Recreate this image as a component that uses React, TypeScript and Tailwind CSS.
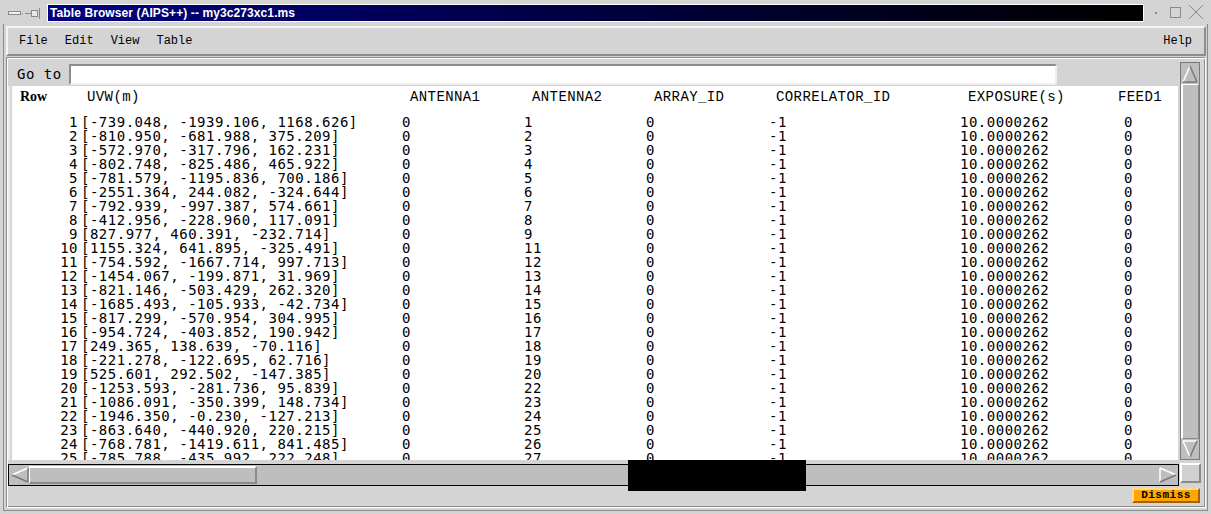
import React from "react";

type Row = [number, string, number];

const rows: Row[] = [
  [1, "[-739.048, -1939.106, 1168.626]", 1],
  [2, "[-810.950, -681.988, 375.209]", 2],
  [3, "[-572.970, -317.796, 162.231]", 3],
  [4, "[-802.748, -825.486, 465.922]", 4],
  [5, "[-781.579, -1195.836, 700.186]", 5],
  [6, "[-2551.364, 244.082, -324.644]", 6],
  [7, "[-792.939, -997.387, 574.661]", 7],
  [8, "[-412.956, -228.960, 117.091]", 8],
  [9, "[827.977, 460.391, -232.714]", 9],
  [10, "[1155.324, 641.895, -325.491]", 11],
  [11, "[-754.592, -1667.714, 997.713]", 12],
  [12, "[-1454.067, -199.871, 31.969]", 13],
  [13, "[-821.146, -503.429, 262.320]", 14],
  [14, "[-1685.493, -105.933, -42.734]", 15],
  [15, "[-817.299, -570.954, 304.995]", 16],
  [16, "[-954.724, -403.852, 190.942]", 17],
  [17, "[249.365, 138.639, -70.116]", 18],
  [18, "[-221.278, -122.695, 62.716]", 19],
  [19, "[525.601, 292.502, -147.385]", 20],
  [20, "[-1253.593, -281.736, 95.839]", 22],
  [21, "[-1086.091, -350.399, 148.734]", 23],
  [22, "[-1946.350, -0.230, -127.213]", 24],
  [23, "[-863.640, -440.920, 220.215]", 25],
  [24, "[-768.781, -1419.611, 841.485]", 26],
  [25, "[-785.788, -435.992, 222.248]", 27],
];

function ArrowUp() {
  return (
    <svg width="18" height="20" viewBox="0 0 18 20">
      <line x1="2" y1="18" x2="9" y2="2" stroke="#ffffff" strokeWidth="1.5" />
      <line x1="9" y1="2" x2="16" y2="18" stroke="#7a7a7a" strokeWidth="1.5" />
      <line x1="2" y1="18" x2="16" y2="18" stroke="#7a7a7a" strokeWidth="1.5" />
    </svg>
  );
}
function ArrowDown() {
  return (
    <svg width="18" height="20" viewBox="0 0 18 20">
      <line x1="2" y1="2" x2="16" y2="2" stroke="#ffffff" strokeWidth="1.5" />
      <line x1="2" y1="2" x2="9" y2="18" stroke="#ffffff" strokeWidth="1.5" />
      <line x1="16" y1="2" x2="9" y2="18" stroke="#7a7a7a" strokeWidth="1.5" />
    </svg>
  );
}
function ArrowLeft() {
  return (
    <svg width="18" height="18" viewBox="0 0 18 18">
      <line x1="1" y1="9" x2="17" y2="2" stroke="#ffffff" strokeWidth="1.5" />
      <line x1="1" y1="9" x2="17" y2="16" stroke="#7a7a7a" strokeWidth="1.5" />
      <line x1="17" y1="2" x2="17" y2="16" stroke="#7a7a7a" strokeWidth="1.5" />
    </svg>
  );
}
function ArrowRight() {
  return (
    <svg width="18" height="18" viewBox="0 0 18 18">
      <line x1="1" y1="2" x2="1" y2="16" stroke="#ffffff" strokeWidth="1.5" />
      <line x1="1" y1="2" x2="17" y2="9" stroke="#ffffff" strokeWidth="1.5" />
      <line x1="1" y1="16" x2="17" y2="9" stroke="#7a7a7a" strokeWidth="1.5" />
    </svg>
  );
}

export default function App() {
  return (
    <div className="relative h-[514px] w-[1211px] overflow-hidden bg-[#d4d4d4] font-['Liberation_Mono',monospace] text-black">
      {/* Title bar */}
      <div className="flex h-[24px] items-start">
        <div className="h-[24px] w-[47px]">
          <svg width="47" height="24" viewBox="0 0 47 24">
            <rect x="8.5" y="11.5" width="12" height="3" fill="#f0f0f0" stroke="#8a8a8a" />
            <rect x="22" y="13" width="1" height="1" fill="#8a8a8a" />
            <line x1="25" y1="13.5" x2="31" y2="13.5" stroke="#8a8a8a" />
            <rect x="31.5" y="10.5" width="6" height="6" fill="#e8e8e8" stroke="#8a8a8a" />
            <line x1="39.5" y1="8" x2="39.5" y2="19" stroke="#8a8a8a" />
          </svg>
        </div>
        <div className="mt-[4px] flex h-[18px] w-[1097px] items-center border border-white bg-[linear-gradient(to_right,#000080,#000000)] pl-[2px] font-['Liberation_Sans',sans-serif] text-[12px] font-bold leading-none tracking-[0.1px] text-white">
          Table Browser (AIPS++) -- my3c273xc1.ms
        </div>
        <div className="h-[24px] w-[67px]">
          <svg width="67" height="24" viewBox="0 0 67 24">
            <rect x="11" y="12" width="2" height="2" fill="#8a8a8a" />
            <rect x="26.5" y="7.5" width="10" height="10" fill="none" stroke="#8a8a8a" />
            <line x1="45" y1="5" x2="59" y2="19" stroke="#8a8a8a" />
            <line x1="59" y1="5" x2="45" y2="19" stroke="#8a8a8a" />
          </svg>
        </div>
      </div>

      {/* Window frame */}
      <div className="ml-[3px] h-[487px] w-[1205px] border-b border-l border-r border-[#8c8c8c] pl-[2px] pt-[2px]">
        {/* Menu bar */}
        <div className="flex h-[30px] w-[1200px] items-center border-2 border-b-[#8c8c8c] border-l-[#f4f4f4] border-r-[#8c8c8c] border-t-[#f4f4f4] pl-[11px] pr-[12px] text-[12px]">
          <div className="flex gap-[17px]">
            <span>File</span>
            <span>Edit</span>
            <span>View</span>
            <span>Table</span>
          </div>
          <span className="ml-auto">Help</span>
        </div>

        {/* Main panel */}
        <div className="mt-[1px] flex h-[451px] w-[1200px] flex-col border border-b-white border-l-[#8c8c8c] border-r-white border-t-[#8c8c8c] pl-[1px] pt-[4px] shadow-[inset_1px_1px_0_#ffffff,inset_-1px_-1px_0_#8c8c8c]">
          <div className="flex h-[398px] gap-[2px]">
            {/* left column */}
            <div className="flex w-[1170px] flex-col">
              <div className="flex h-[24px] items-start">
                <div className="flex h-[24px] w-[61px] items-center pl-[9px] font-['DejaVu_Sans_Mono',monospace] text-[14px] tracking-[0.5px]">
                  Go to
                </div>
                <div className="mt-[2px] h-[21px] w-[988px] border-2 border-b-[#eeeeee] border-l-[#8c8c8c] border-r-[#eeeeee] border-t-[#8c8c8c] bg-white" />
              </div>
              <div className="flex h-[374px] border-l-2 border-[#ececec] pl-[2px]">
                <div className="h-[374px] w-[1166px] overflow-hidden bg-white">
                  {/* header */}
                  <div className="mt-[4px] flex h-[14px] items-center whitespace-pre text-[14px] leading-[14px] tracking-[0.4px]">
                    <span className="w-[8px]" />
                    <span className="w-[67px] font-['Liberation_Serif',serif] text-[14px] font-bold tracking-normal">Row</span>
                    <span className="w-[323px]">UVW(m)</span>
                    <span className="w-[122px]">ANTENNA1</span>
                    <span className="w-[122px]">ANTENNA2</span>
                    <span className="w-[122px]">ARRAY_ID</span>
                    <span className="w-[192px]">CORRELATOR_ID</span>
                    <span className="w-[150px]">EXPOSURE(s)</span>
                    <span>FEED1</span>
                  </div>
                  {/* data */}
                  <div className="mt-[11px] flex flex-col font-['DejaVu_Sans_Mono',monospace] text-[14px] leading-[14px] tracking-[0.5px]">
                    {rows.map((r) => (
                      <div key={r[0]} className="flex h-[14px] whitespace-pre">
                        <span className="w-[66px] text-right">{r[0]}</span>
                        <span className="w-[324px] pl-[3px]">{r[1]}</span>
                        <span className="w-[122px]">0</span>
                        <span className="w-[122px]">{r[2]}</span>
                        <span className="w-[122px]">0</span>
                        <span className="w-[192px] pl-[1px]">-1</span>
                        <span className="w-[164px]">10.0000262</span>
                        <span>0</span>
                      </div>
                    ))}
                  </div>
                </div>
              </div>
            </div>
            {/* vertical scrollbar */}
            <div className="flex h-[398px] w-[20px] flex-col border border-[#7a7a7a] bg-[#bebebe]">
              <div className="flex h-[21px] items-center justify-center">
                <ArrowUp />
              </div>
              <div className="flex-1 border-b border-l-2 border-r border-t border-b-[#8a8a8a] border-l-white border-r-[#8a8a8a] border-t-white bg-[#bebebe]" />
              <div className="flex h-[20px] items-center justify-center">
                <ArrowDown />
              </div>
            </div>
          </div>

          {/* horizontal scrollbar row */}
          <div className="mt-[3px] flex h-[23px] items-start gap-[1px]">
            <div className="mt-[1px] flex h-[22px] w-[1171px] items-center border border-black bg-[#bebebe] px-[1px]">
              <div className="flex h-[20px] w-[19px] items-center justify-center">
                <ArrowLeft />
              </div>
              <div className="h-[18px] w-[228px] border-b-2 border-l border-r-2 border-t-2 border-b-[#8a8a8a] border-l-white border-r-[#8a8a8a] border-t-white bg-[#bebebe]" />
              <div className="flex-1" />
              <div className="flex h-[20px] w-[19px] items-center justify-center">
                <ArrowRight />
              </div>
            </div>
            <div className="h-[20px] w-[21px] border-2 border-b-[#8a8a8a] border-l-white border-r-[#8a8a8a] border-t-white bg-[#d0d0d0]" />
          </div>

          {/* bottom row */}
          <div className="mt-[2px] flex justify-end pr-[5px]">
            <div className="flex h-[15px] w-[68px] items-center justify-center border-2 border-b-[#a06400] border-l-[#ffd890] border-r-[#a06400] border-t-[#ffd890] bg-[#ffa500] font-['Liberation_Mono',monospace] text-[11px] font-bold leading-none tracking-[0.5px]">
              Dismiss
            </div>
          </div>
        </div>
      </div>

      {/* redaction block */}
      <div className="absolute left-[628px] top-[460px] h-[31px] w-[178px] bg-black" />
    </div>
  );
}
